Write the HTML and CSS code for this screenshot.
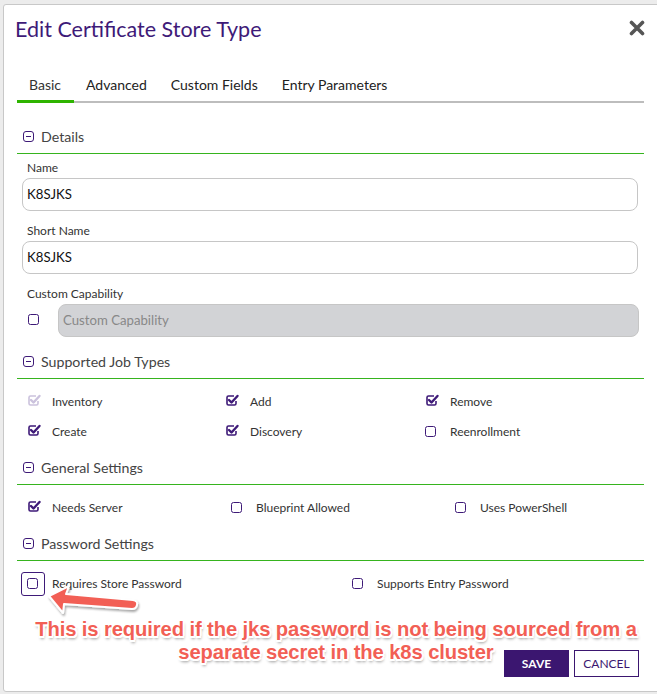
FILE: index.html
```html
<!DOCTYPE html>
<html>
<head>
<meta charset="utf-8">
<link rel="stylesheet" href="styles.css">
</head>
<body>
<div class="backdrop">
  <div class="modal">
    <div class="modal-head">
      <h1 class="title">Edit Certificate Store Type</h1>
      <svg class="close" viewBox="0 0 16 16" width="16" height="16"><path d="M2.5 2.5 L13.5 13.5 M13.5 2.5 L2.5 13.5"/></svg>
    </div>
    <div class="tabs">
      <span class="tab active">Basic</span>
      <span class="tab">Advanced</span>
      <span class="tab">Custom Fields</span>
      <span class="tab">Entry Parameters</span>
    </div>

    <div class="section first">
      <div class="section-head"><span class="minus"></span>Details</div>
      <label class="field-label">Name</label>
      <div class="input">K8SJKS</div>
      <label class="field-label">Short Name</label>
      <div class="input">K8SJKS</div>
      <label class="field-label">Custom Capability</label>
      <div class="cap-row">
        <span class="cb"></span>
        <div class="input disabled">Custom Capability</div>
      </div>
    </div>

    <div class="section jobs-section">
      <div class="section-head"><span class="minus"></span>Supported Job Types</div>
      <div class="grid jobs">
        <div class="opt"><span class="cb checked faded"><svg viewBox="0 0 14 13"><path d="M9 2 L3.5 2 Q2 2 2 3.5 L2 9.5 Q2 11 3.5 11 L9.5 11 Q11 11 11 9.5 L11 7" class="bx"/><path d="M4 6 L6.5 8.5 L12.5 2" class="ck"/></svg></span>Inventory</div>
        <div class="opt"><span class="cb checked"><svg viewBox="0 0 14 13"><path d="M9 2 L3.5 2 Q2 2 2 3.5 L2 9.5 Q2 11 3.5 11 L9.5 11 Q11 11 11 9.5 L11 7" class="bx"/><path d="M4 6 L6.5 8.5 L12.5 2" class="ck"/></svg></span>Add</div>
        <div class="opt"><span class="cb checked"><svg viewBox="0 0 14 13"><path d="M9 2 L3.5 2 Q2 2 2 3.5 L2 9.5 Q2 11 3.5 11 L9.5 11 Q11 11 11 9.5 L11 7" class="bx"/><path d="M4 6 L6.5 8.5 L12.5 2" class="ck"/></svg></span>Remove</div>
        <div class="opt"><span class="cb checked"><svg viewBox="0 0 14 13"><path d="M9 2 L3.5 2 Q2 2 2 3.5 L2 9.5 Q2 11 3.5 11 L9.5 11 Q11 11 11 9.5 L11 7" class="bx"/><path d="M4 6 L6.5 8.5 L12.5 2" class="ck"/></svg></span>Create</div>
        <div class="opt"><span class="cb checked"><svg viewBox="0 0 14 13"><path d="M9 2 L3.5 2 Q2 2 2 3.5 L2 9.5 Q2 11 3.5 11 L9.5 11 Q11 11 11 9.5 L11 7" class="bx"/><path d="M4 6 L6.5 8.5 L12.5 2" class="ck"/></svg></span>Discovery</div>
        <div class="opt"><span class="cb"></span>Reenrollment</div>
      </div>
    </div>

    <div class="section">
      <div class="section-head"><span class="minus"></span>General Settings</div>
      <div class="grid general">
        <div class="opt"><span class="cb checked"><svg viewBox="0 0 14 13"><path d="M9 2 L3.5 2 Q2 2 2 3.5 L2 9.5 Q2 11 3.5 11 L9.5 11 Q11 11 11 9.5 L11 7" class="bx"/><path d="M4 6 L6.5 8.5 L12.5 2" class="ck"/></svg></span>Needs Server</div>
        <div class="opt"><span class="cb"></span>Blueprint Allowed</div>
        <div class="opt"><span class="cb"></span>Uses PowerShell</div>
      </div>
    </div>

    <div class="section">
      <div class="section-head"><span class="minus"></span>Password Settings</div>
      <div class="grid password">
        <div class="opt"><span class="cb highlighted"></span>Requires Store Password</div>
        <div class="opt"><span class="cb"></span>Supports Entry Password</div>
      </div>
    </div>

    <div class="footer">
      <button class="btn primary">SAVE</button>
      <button class="btn secondary">CANCEL</button>
    </div>

    <svg class="arrow" viewBox="0 0 100 40" width="100" height="40">
      <defs>
        <filter id="sh" x="-20%" y="-40%" width="140%" height="180%">
          <feDropShadow dx="1" dy="2" stdDeviation="1.2" flood-color="#000" flood-opacity="0.35"/>
        </filter>
      </defs>
      <path d="M4 12 L24 2 L21 10 L88 16 Q93 17 92 21 Q91 25 87 25 L19 20 L18 29 Z" fill="#f25f55" stroke="#fff" stroke-width="2" stroke-linejoin="round" filter="url(#sh)"/>
    </svg>
    <div class="note">This is required if the jks password is not being sourced from a<br>separate secret in the k8s cluster</div>
  </div>
</div>
</body>
</html>
```

FILE: styles.css
```css
* { box-sizing: border-box; }
html, body { margin: 0; padding: 0; }
body {
  width: 657px;
  height: 694px;
  overflow: hidden;
  background: #ececec;
  font-family: Lato, "Liberation Sans", sans-serif;
  color: #333;
}
.backdrop {
  padding: 4px 0 0 3px;
}
.modal {
  position: relative;
  width: 680px;
  height: 688px;
  background: #fff;
  border: 1px solid #c8c8c8;
  border-radius: 3px;
  padding: 0 0 0 13px;
}
.modal > * { width: 627px; }
.modal-head {
  display: flex;
  justify-content: space-between;
  align-items: center;
  height: 47px;
}
.title {
  margin: 0 0 0 -2px;
  font-weight: 400;
  font-size: 21.5px;
  color: #3e1a78;
}
.close {
  width: 16px;
  height: 16px;
  margin-right: -1px;
  margin-top: -2px;
}
.close path {
  stroke: #555;
  stroke-width: 3.6;
  stroke-linecap: round;
  fill: none;
}
.tabs {
  display: flex;
  margin-top: 17px;
  box-shadow: inset 0 -2px 0 #bdbdbd;
  height: 34px;
}
.tab {
  padding: 0 12px;
  font-size: 14px;
  color: #222;
  line-height: 32px;
  height: 34px;
}
.tab:first-child { width: 57px; }
.tab.active {
  border-bottom: 3px solid #2eb400;
  color: #333;
}
.section-head {
  display: flex;
  align-items: center;
  font-size: 14.2px;
  color: #444;
  height: 34px;
  padding-left: 6px;
  border-bottom: 1px solid #36b41e;
  margin-top: 5px;
}
.section.first .section-head { margin-top: 17px; }
.section.jobs-section .section-head { margin-top: 8px; }
.minus {
  width: 11px;
  height: 11px;
  border: 1.4px solid #3e1a78;
  border-radius: 3px;
  margin-right: 7px;
  position: relative;
}
.minus::after {
  content: "";
  position: absolute;
  left: 2px;
  right: 2px;
  top: 3.6px;
  height: 1.4px;
  background: #3e1a78;
}
.field-label {
  display: block;
  font-size: 12px;
  color: #333;
  padding-left: 10px;
  margin-top: 12px;
  margin-bottom: 2px;
  height: 16px;
  line-height: 16px;
}
.section.first .section-head + .field-label { margin-top: 6px; }
.input {
  margin-left: 5px;
  width: 616px;
  height: 33px;
  border: 1px solid #c6c6c6;
  border-radius: 8px;
  font-size: 13.2px;
  color: #111;
  padding: 0 4px;
  line-height: 31px;
}
.cap-row {
  display: flex;
  align-items: center;
  padding-left: 11px;
}
.cap-row .cb { margin-right: 19px; margin-top: -3px; }
.input.disabled {
  margin-left: 0;
  width: 581px;
  background: #d2d3d6;
  color: #888;
  padding-left: 4px;
}
.cb {
  display: inline-block;
  width: 11px;
  height: 11px;
  border: 1.6px solid #3e1a78;
  border-radius: 2.5px;
  flex: none;
  position: relative;
}
.cb.checked {
  border: none;
  width: 14px;
  height: 13px;
  margin-top: -2px;
}
.cb svg { width: 14px; height: 13px; display: block; overflow: visible; }
.cb .bx { fill: none; stroke: #3e1a78; stroke-width: 1.6; stroke-linejoin: round; }
.cb .ck { fill: none; stroke: #3e1a78; stroke-width: 2.4; stroke-linecap: round; stroke-linejoin: round; }
.cb.faded .bx, .cb.faded .ck { stroke: #cbc2dd; }
.cb.highlighted::before {
  content: "";
  position: absolute;
  left: -7px;
  top: -7px;
  width: 22px;
  height: 22px;
  border: 1.2px solid #3e1a78;
  border-radius: 3px;
}
.grid {
  display: grid;
  font-size: 12px;
  color: #333;
  padding-top: 7px;
}
.opt {
  display: flex;
  align-items: center;
  height: 30px;
}
.opt .cb { margin-left: 10px; margin-right: 14px; }
.opt .cb.checked { margin-right: 11px; }
.jobs { grid-template-columns: 198px 200px 1fr; }
.general { grid-template-columns: 204px 224px 1fr; }
.password { grid-template-columns: 325px 1fr; }
.footer {
  display: flex;
  justify-content: flex-end;
  gap: 5px;
  padding-right: 5px;
  margin-top: 52px;
}
.btn {
  height: 27px;
  width: 65px;
  font-family: Lato, "Liberation Sans", sans-serif;
  font-size: 12px;
  border-radius: 0;
  cursor: pointer;
}
.btn.primary {
  background: #3b1670;
  border: 1px solid #3b1670;
  color: #fff;
  font-weight: 700;
}
.btn.secondary {
  background: #fff;
  border: 1px solid #3b1670;
  color: #3b1670;
}
.arrow {
  position: absolute;
  left: 41px;
  top: 579px;
  width: 100px;
}
.note {
  position: absolute;
  left: 17px;
  top: 613px;
  width: 630px;
  text-align: center;
  font-family: "Liberation Sans", Arial, sans-serif;
  font-weight: 700;
  font-size: 20.2px;
  line-height: 23px;
  color: #f25f55;
  letter-spacing: -0.1px;
  text-shadow:
    -1.5px -1.5px 0 #fff, 1.5px -1.5px 0 #fff, -1.5px 1.5px 0 #fff, 1.5px 1.5px 0 #fff,
    0 -1.8px 0 #fff, 0 1.8px 0 #fff, -1.8px 0 0 #fff, 1.8px 0 0 #fff,
    1px 3px 3px rgba(0,0,0,0.45);
}
```
